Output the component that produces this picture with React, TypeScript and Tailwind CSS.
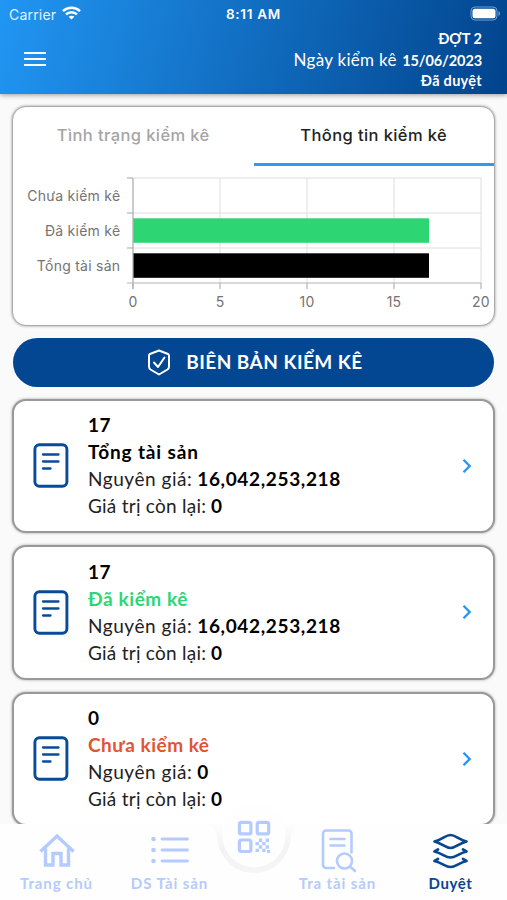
import React from "react";

type Asset = { count: string; label: string; tone: string; price: string; rest: string };

const assets: Asset[] = [
  { count: "17", label: "Tổng tài sản", tone: "text-black tracking-[0.85px]", price: "16,042,253,218", rest: "0" },
  { count: "17", label: "Đã kiểm kê", tone: "text-[#2ed573] tracking-[0.6px]", price: "16,042,253,218", rest: "0" },
  { count: "0", label: "Chưa kiểm kê", tone: "text-[#e2532f] tracking-[0.5px]", price: "0", rest: "0" },
];

function Header() {
  return (
    <header className="relative z-10 h-[94px] shrink-0 bg-[linear-gradient(105deg,#2196f3_0%,#01438c_100%)] text-white shadow-[0_1px_5px_rgba(0,0,0,0.4)]">
      <div className="grid h-7 grid-cols-3 items-center pl-[9px] pr-[6px] font-['Inter',sans-serif] text-[14px]">
        <div className="flex items-center gap-[6px]">
          <span className="tracking-[0.2px] text-[#e3f2ff]">Carrier</span>
          <svg className="-mt-[2px]" width="19" height="14" viewBox="0 0 19 14" fill="none" stroke="white" strokeWidth="2.5">
            <path d="M1 5.1C5.7.6 13.3.6 18 5.1" />
            <path d="M4 8.3c3-2.9 8-2.900 11 0" />
            <path d="M9.500 13.600 6.600 10.800c1.600-1.500 4.200-1.500 5.800 0z" fill="white" stroke="none" />
          </svg>
        </div>
        <span className="mr-[3px] text-center text-[13.5px] font-semibold tracking-[0.7px]">8:11 AM</span>
        <svg className="-mt-[2px] ml-auto" width="31" height="15" viewBox="0 0 31 15">
          <rect x="1" y="1" width="26" height="13" rx="4" fill="none" stroke="#6d9fd6" strokeWidth="1" />
          <rect x="2.500" y="2.700" width="23" height="9.600" rx="2.500" fill="white" />
          <path d="M28.500 5.200c2 .7 2 3.900 0 4.600z" fill="#6d9fd6" />
        </svg>
      </div>
      <div className="flex items-start justify-between pl-6 pr-[25px]">
        <div className="mt-6 flex w-[22px] flex-col gap-[4px]">
          <i className="h-[2px] bg-white" />
          <i className="h-[2px] bg-white" />
          <i className="h-[2px] bg-white" />
        </div>
        <div className="text-right text-[14.5px] font-bold leading-[21.500px]">
          <p className="h-[21.500px]">ĐỢT 2</p>
          <p className="-mt-px h-[21.500px] tracking-[-0.1px]"><span className="mr-[2px] text-[17px] font-normal tracking-[0.3px]">Ngày kiểm kê</span> 15/06/2023</p>
          <p className="h-[21px] tracking-[0.3px]">Đã duyệt</p>
        </div>
      </div>
    </header>
  );
}

function Chart() {
  const columns = [0, 5, 10, 15, 20];
  const rows = ["Chưa kiểm kê", "Đã kiểm kê", "Tổng tài sản"];
  return (
    <svg className="block" width="480" height="158" viewBox="13 166 480 158" fontFamily="Inter, sans-serif" fontSize="14" fill="#747474">
      <g stroke="#dedede" strokeWidth="1">
        {columns.map((n) => <path key={n} d={`M${133 + n * 17.4} 178V283`} />)}
        {[178, 213, 248].map((y) => <path key={y} d={`M133 ${y}H481`} />)}
      </g>
      <rect x="133" y="218.300" width="296" height="24.500" fill="#2ed573" />
      <rect x="133" y="253.300" width="296" height="24.500" fill="#000" />
      <g stroke="#b3b3b3" strokeWidth="1.200">
        <path d="M133 178V289M127 283H481" />
        {[178, 213, 248].map((y) => <path key={y} d={`M127 ${y}h6`} />)}
        {columns.map((n) => <path key={n} d={`M${133 + n * 17.4} 283v6`} />)}
      </g>
      {rows.map((t, i) => <text key={t} x="120.300" y={201 + i * 35} textAnchor="end" letterSpacing="0.250">{t}</text>)}
      {columns.map((n) => <text key={n} x={133 + n * 17.4} y="306.500" textAnchor="middle" letterSpacing="0.200">{n}</text>)}
    </svg>
  );
}

function DocumentIcon() {
  return (
    <svg width="36" height="45" viewBox="0 0 36 45" fill="none" stroke="#084b99" strokeLinecap="round">
      <rect x="1.900" y="1.700" width="32" height="41.500" rx="4.500" strokeWidth="2.900" />
      <path d="M10 11.500h15.500M10 18.500h15.500M10 25.500h7.500" strokeWidth="2.300" />
    </svg>
  );
}

function AssetCard({ item }: { item: Asset }) {
  return (
    <article className="flex h-[134.500px] shrink-0 items-center rounded-[14px] border-2 border-[#999] bg-white pl-[18.500px] pr-[21px] text-black shadow-[0_0_3px_rgba(0,0,0,0.35)]">
      <DocumentIcon />
      <div className="-mt-[1px] ml-[19.500px] flex-1 text-[19px] leading-[27px]">
        <p className="font-bold tracking-[0.6px]">{item.count}</p>
        <p className={`font-bold ${item.tone}`}>{item.label}</p>
        <p><span className="tracking-[0.55px] text-[#222]">Nguyên giá:</span> <b className="tracking-[0.65px]">{item.price}</b></p>
        <p><span className="tracking-[0.25px] text-[#222]">Giá trị còn lại:</span> <b>{item.rest}</b></p>
      </div>
      <svg width="10" height="16" viewBox="0 0 10 16" fill="none" stroke="#2196f3" strokeWidth="2.300">
        <path d="m1.500 1.800 6.200 6.200-6.200 6.200" />
      </svg>
    </article>
  );
}

function NavItem({ label, active, children }: { label: string; active?: boolean; children: React.ReactNode }) {
  return (
    <div className={`flex w-[113px] flex-col items-center ${active ? "text-[#084690]" : "text-[#b4cbff]"}`}>
      <div className="flex h-[50px] items-end">{children}</div>
      <span className={`text-[15px] font-bold leading-5 ${active ? "tracking-[0.6px]" : "tracking-[0.9px]"}`}>{label}</span>
    </div>
  );
}

function BottomNav() {
  return (
    <nav className="absolute bottom-0 left-0 h-[100px] w-full">
      <svg className="absolute left-0 top-0" width="507" height="100" viewBox="0 800 507 100">
        <defs>
          <linearGradient id="rim" x1="0" y1="0" x2="0" y2="1">
            <stop offset="0" stopColor="#fdfdfd" />
            <stop offset="0.500" stopColor="#f3f3f3" />
            <stop offset="1" stopColor="#f5f5f5" />
          </linearGradient>
        </defs>
        <path d="M0 824H507V900H0Z" fill="#fefefe" />
        <circle cx="254" cy="836" r="34" fill="#fefefe" />
        <path d="M204 824.500C212 824.500 216 829 217 837C219 858 234 873 254 873S289 858 291 837C292 829 296 824.500 304 824.500Z" fill="url(#rim)" />
        <circle cx="254" cy="836" r="31.500" fill="#fefefe" />
        <g fill="none" stroke="#b4cbff" strokeWidth="3.200">
          <rect x="239.400" y="822.400" width="11.500" height="11.500" rx="2" />
          <rect x="257.200" y="822.400" width="11.500" height="11.500" rx="2" />
          <rect x="239.400" y="840" width="11.500" height="11.500" rx="2" />
        </g>
        <path fill="#b4cbff" d="M258.800 838.500h3.400v3.400h-3.400zM265.600 838.500h3.400v3.400h-3.400zM255.500 841.900h3.400v3.400h-3.400zM262.200 841.900h3.400v3.400h-3.400zM258.800 845.300h3.400v3.400h-3.400zM265.600 845.300h3.400v3.400h-3.400zM255.500 848.700h3.400v3.400h-3.400zM262.200 848.700h3.400v3.400h-3.400zM267 850h3v3h-3z" />
      </svg>
      <div className="relative flex h-full pt-[23px]">
        <NavItem label="Trang chủ">
          <svg width="36" height="50" viewBox="0 0 36 50" fill="none" stroke="currentColor" strokeWidth="3.400">
            <path d="m1.500 28.500 16.500-15.500 16.500 15.500M6.500 25.500V42h7.500V30.500h8V42h7.500V25.500" />
          </svg>
        </NavItem>
        <NavItem label="DS Tài sản">
          <svg width="38" height="50" viewBox="0 0 38 50" fill="none" stroke="currentColor" strokeLinecap="round">
            <path d="M2.500 16h.01M2.500 27h.01M2.500 38h.01" strokeWidth="4.600" />
            <path d="M11 16h25.500M11 27h25.500M11 38h25.500" strokeWidth="2.800" />
          </svg>
        </NavItem>
        <div className="w-[55px]" />
        <NavItem label="Tra tài sản">
          <svg width="36" height="50" viewBox="0 0 36 50" fill="none" stroke="currentColor" strokeLinecap="round" strokeLinejoin="round" strokeWidth="2.600">
            <path d="M14 45H6a3 3 0 0 1-3-3V10.500a3 3 0 0 1 3-3h22.500a3 3 0 0 1 3 3v19M10.500 16h14M10.500 22.500h14" />
            <circle cx="24.500" cy="38" r="7.500" />
            <path d="m30 43.500 5 4.500" />
          </svg>
        </NavItem>
        <NavItem label="Duyệt" active>
          <svg width="37" height="50" viewBox="0 0 37 50" fill="none" stroke="currentColor" strokeWidth="2.700" strokeLinecap="round" strokeLinejoin="round">
            <path d="M18.500 12c5 0 8 4.500 16 6.500-8 2-11 6.500-16 6.500s-8-4.500-16-6.500c8-2 11-6.500 16-6.500ZM6 26.500l-3.500 2c8 2 11 6 16 6s8-4 16-6l-3.500-2M6 36l-3.500 2c8 2 11 6 16 6s8-4 16-6L31 36" />
          </svg>
        </NavItem>
      </div>
    </nav>
  );
}

export default function App() {
  return (
    <div className="relative flex h-[900px] w-[507px] flex-col overflow-hidden bg-[#fafafa] font-['Lato','Noto_Sans',sans-serif]">
      <Header />
      <main className="flex flex-1 flex-col px-3 pt-3">
        <section className="h-[220px] shrink-0 rounded-[14px] border-[1.500px] border-[#aaa] bg-white shadow-[0_0_3px_rgba(0,0,0,0.4)]">
          <div className="grid h-[59px] grid-cols-2 text-center font-['Inter',sans-serif] text-[16.5px] font-medium leading-[56px] tracking-[0.4px]">
            <span className="text-[#a5a5a5]">Tình trạng kiểm kê</span>
            <span className="border-b-[3px] border-[#3698e8] text-[#222]">Thông tin kiểm kê</span>
          </div>
          <Chart />
        </section>
        <button className="mx-px mt-3 flex h-[49px] shrink-0 items-center justify-center gap-[15px] rounded-full bg-[#034793] pl-[3px] text-[19px] font-bold text-white">
          <svg width="24" height="27" viewBox="0 0 24 27" fill="none" stroke="currentColor" strokeWidth="2" strokeLinejoin="round" strokeLinecap="round">
            <path d="M12 1.500 21 5q1 .4 1 1.500v11q0 2-1.500 3L12 25.500 3.500 20.500Q2 19.500 2 17.500v-11Q2 5.400 3 5ZM7 13.500l4 4.500 6.500-9.500" />
          </svg>
          <span className="tracking-[0.45px]">BIÊN BẢN KIỂM KÊ</span>
        </button>
        <div className="mt-[11.500px] flex flex-col gap-3">
          {assets.map((item) => <AssetCard key={item.label} item={item} />)}
        </div>
      </main>
      <BottomNav />
    </div>
  );
}
